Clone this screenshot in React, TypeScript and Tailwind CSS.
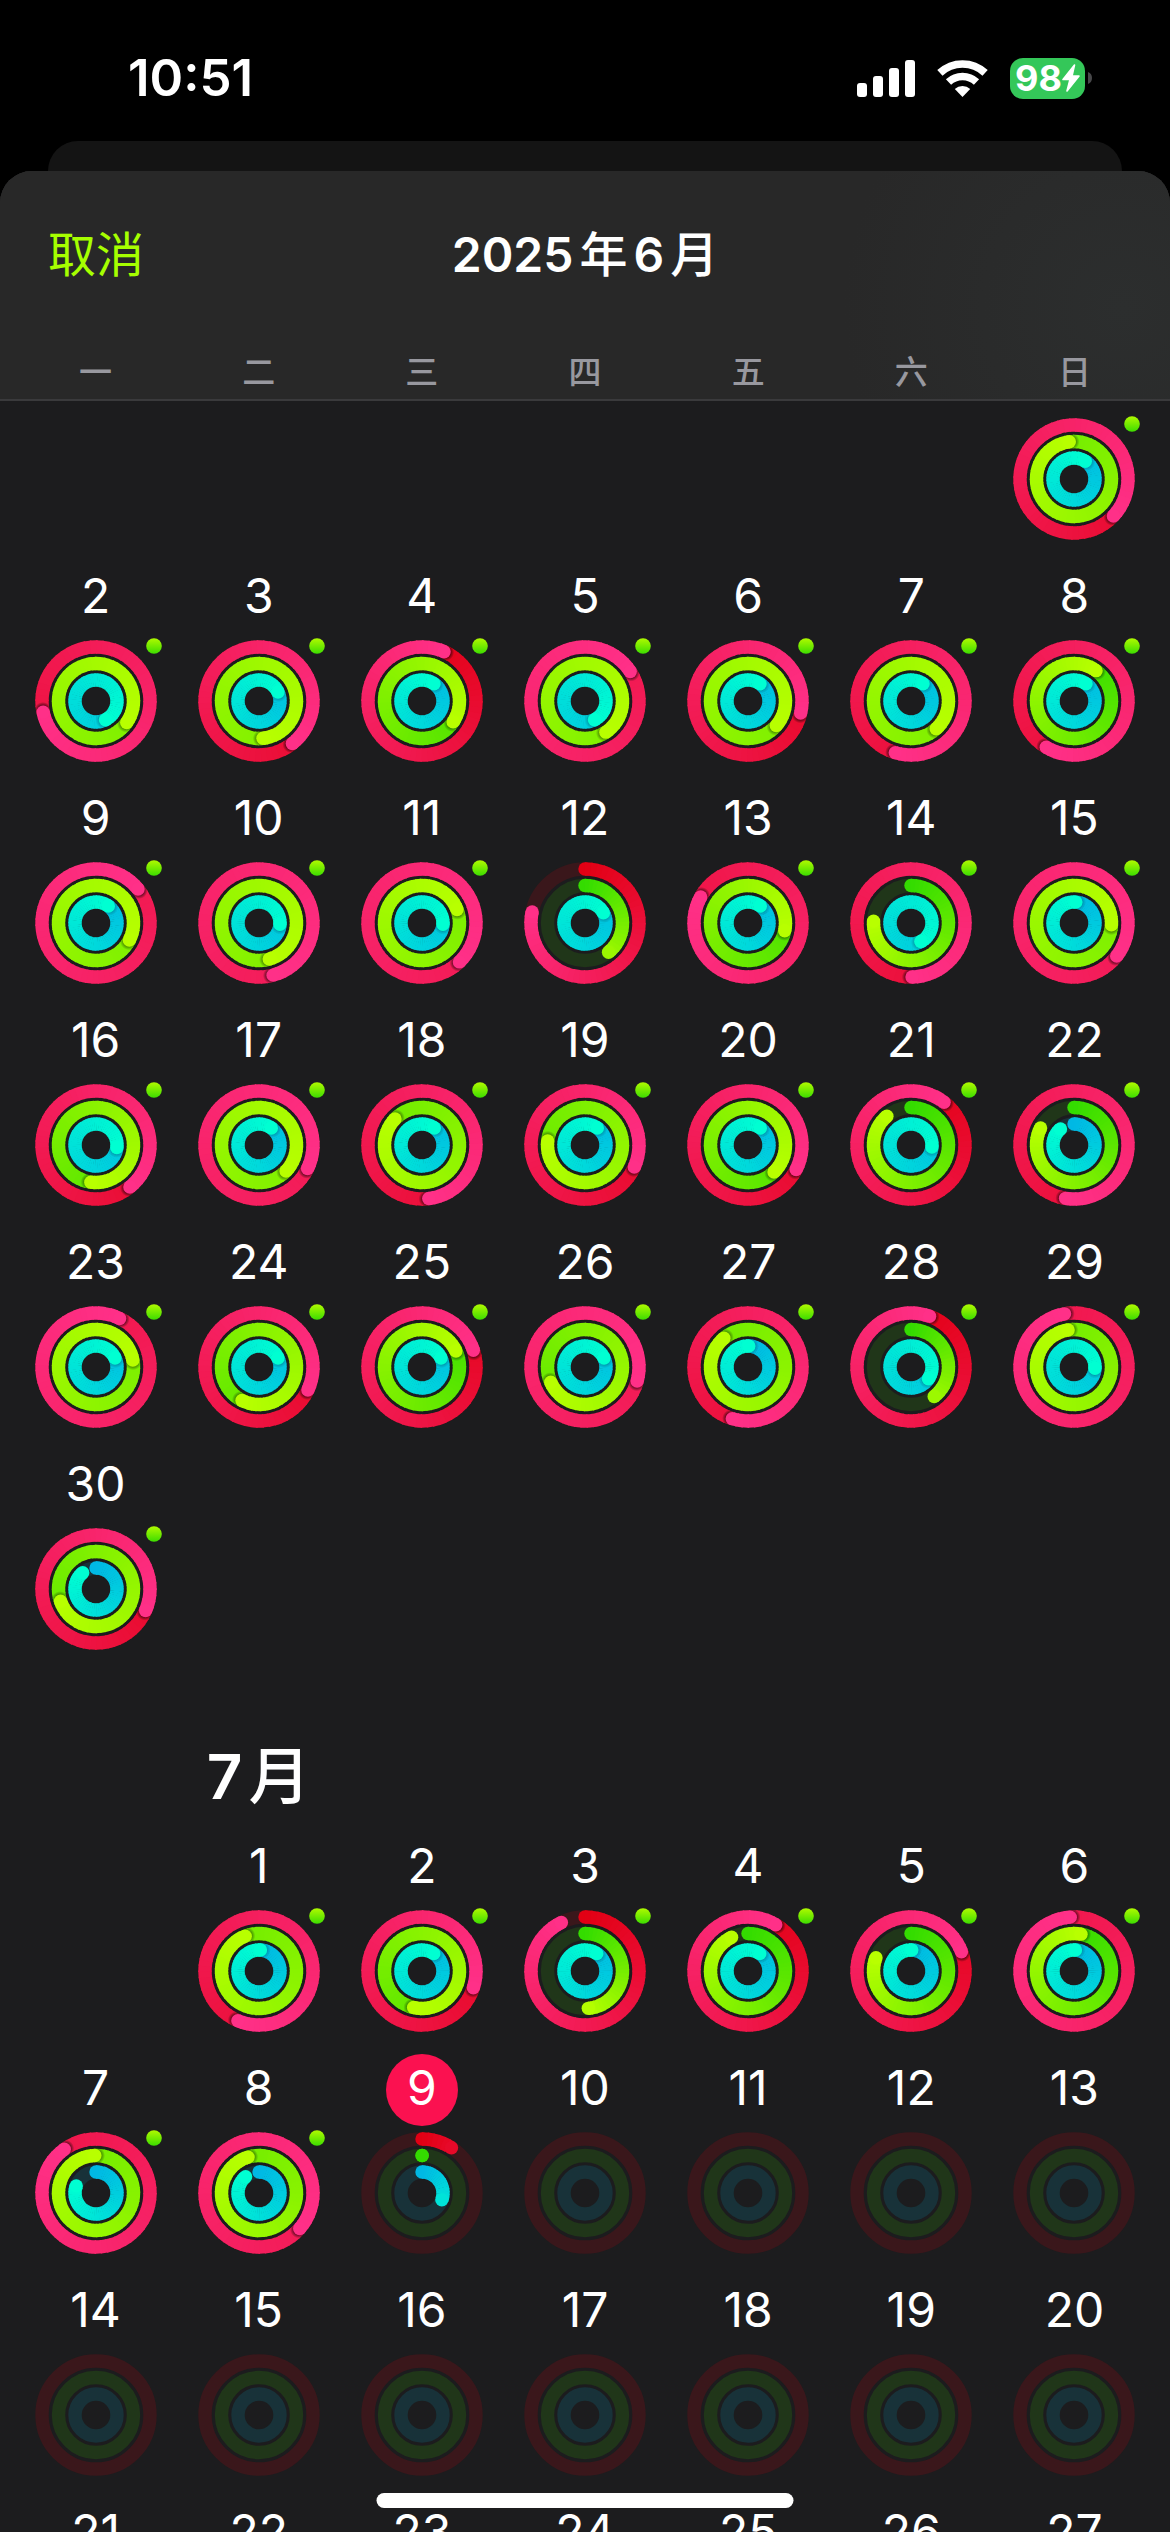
import React from 'react';

type Progress = [move: number, exercise: number, stand: number];
type Day = { day: number; rings?: Progress; award?: boolean; today?: boolean };
type RGB = [number, number, number];

const WEEKDAYS = ['一', '二', '三', '四', '五', '六', '日'];

const JUNE: Progress[] = [
  [1.37, 1.98, 1.09],
  [1.717, 2.347, 1.425],
  [1.394, 2.483, 1.18],
  [1.067, 1.344, 1.097],
  [2.158, 2.406, 1.425],
  [1.286, 2.364, 1.097],
  [1.547, 2.383, 1.097],
  [1.586, 1.1, 1.097],
  [2.142, 2.325, 1.1],
  [2.458, 2.456, 1.26],
  [2.378, 2.192, 1.26],
  [0.783, 0.392, 1.17],
  [1.83, 1.283, 1.1],
  [1.497, 0.758, 1.422],
  [2.355, 2.258, 1.014],
  [1.392, 1.522, 1.27],
  [2.322, 2.372, 1.1],
  [1.48, 1.872, 1.1],
  [1.317, 1.767, 1.1],
  [1.325, 1.378, 1.1],
  [1.105, 0.889, 1.265],
  [1.525, 0.825, 0.889],
  [2.072, 2.22, 1.18],
  [1.32, 1.575, 1.18],
  [1.2, 1.18, 1.18],
  [2.292, 1.683, 1.18],
  [1.547, 1.889, 1.006],
  [1.056, 0.394, 1.344],
  [1.972, 1.975, 1.26],
  [1.315, 1.697, 0.891],
];

const JULY: Progress[] = [
  [1.564, 1.94, 1.011],
  [1.3, 1.536, 1.095],
  [0.928, 0.486, 1.095],
  [1.086, 0.928, 1.095],
  [1.192, 0.808, 1.006],
  [1.989, 1.03, 1.011],
  [1.9, 1.995, 0.805],
  [2.364, 1.953, 0.89],
  [0.092, 0.001, 0.303],
];

const NO_AWARD = { june: [12], july: [9] };

function makeDays(count: number, data: Progress[], noAward: number[], today?: number): Day[] {
  return Array.from({ length: count }, (_, i) => ({
    day: i + 1,
    rings: data[i],
    award: i < data.length && !noAward.includes(i + 1),
    today: today === i + 1,
  }));
}

const juneDays = makeDays(30, JUNE, NO_AWARD.june);
const julyDays = makeDays(27, JULY, NO_AWARD.july, 9);

const RINGS: { radius: number; track: string; from: RGB; to: RGB; shade: number }[] = [
  { radius: 54, track: '#3a171b', from: [226, 0, 20], to: [255, 48, 136], shade: 0.5 },
  { radius: 37.5, track: '#203619', from: [52, 220, 0], to: [184, 255, 0], shade: 0.35 },
  { radius: 21, track: '#183239', from: [0, 184, 228], to: [0, 255, 210], shade: 0.18 },
];

const STROKE = 13.4;

function point(radius: number, turns: number) {
  const a = turns * Math.PI * 2;
  return { x: radius * Math.sin(a), y: -radius * Math.cos(a) };
}

function mix(from: RGB, to: RGB, t: number) {
  const k = Math.max(0, Math.min(1, t));
  return `rgb(${from.map((c, i) => Math.round(c + (to[i] - c) * k)).join(',')})`;
}

function arc(radius: number, start: number, end: number) {
  const a = point(radius, start);
  const b = point(radius, end);
  return `M${a.x.toFixed(2)} ${a.y.toFixed(2)}A${radius} ${radius} 0 0 1 ${b.x.toFixed(2)} ${b.y.toFixed(2)}`;
}

function Ring({ index, value }: { index: number; value: number }) {
  const { radius, from, to, shade } = RINGS[index];
  // Short goals never reach the brightest end of the gradient.
  const span = Math.max(value, 0.5);
  const start = Math.max(0, value - 1);
  const steps = Math.max(1, Math.ceil((value - start) * 60));
  const size = (value - start) / steps;
  const parts = Array.from({ length: steps }, (_, i) => {
    const s = start + i * size;
    const e = s + size;
    const color = mix(from, to, (s + size / 2) / span);
    return (
      <path
        key={i}
        d={arc(radius, s, i === steps - 1 ? e : e + 0.004)}
        stroke={color}
        strokeWidth={STROKE}
        fill="none"
      />
    );
  });
  const front = Math.min(8, steps);
  const tip = point(radius, value);
  const head = point(radius, 0);
  const shadow = point(radius, value + 0.2 / radius);
  return (
    <g>
      {value < 1 && <circle cx={head.x} cy={head.y} r={STROKE / 2} fill={mix(from, to, 0)} />}
      {parts.slice(0, steps - front)}
      {value >= 1 && (
        <g clipPath={`url(#ring-${index})`}>
          <circle cx={shadow.x} cy={shadow.y} r={9} fill="url(#tip-shadow)" opacity={shade} />
        </g>
      )}
      {parts.slice(steps - front)}
      <circle cx={tip.x} cy={tip.y} r={STROKE / 2} fill={mix(from, to, value / span)} />
    </g>
  );
}

function ActivityRings({ rings, award }: { rings?: Progress; award?: boolean }) {
  return (
    <svg viewBox="-61 -61 122 122" className="size-[122px] overflow-visible" aria-hidden="true">
      {RINGS.map((ring, i) => (
        <g key={i}>
          <circle r={ring.radius} stroke={ring.track} strokeWidth={STROKE} fill="none" />
          {rings && <Ring index={i} value={rings[i]} />}
        </g>
      ))}
      {award && <circle cx={58} cy={-55} r={7.8} fill="url(#award)" />}
    </svg>
  );
}

function SharedDefs() {
  return (
    <svg className="absolute size-0" aria-hidden="true">
      <defs>
        <radialGradient id="tip-shadow">
          <stop offset="0.65" stopColor="#000" stopOpacity="1" />
          <stop offset="1" stopColor="#000" stopOpacity="0" />
        </radialGradient>
        <linearGradient id="award" x1="0" y1="0" x2="0" y2="1">
          <stop offset="0" stopColor="#b0fa00" />
          <stop offset="1" stopColor="#3cdc00" />
        </linearGradient>
        {RINGS.map(({ radius }, i) => {
          const o = radius + STROKE / 2;
          const n = radius - STROKE / 2;
          return (
            <clipPath id={`ring-${i}`} key={i}>
              <path
                clipRule="evenodd"
                d={`M${-o} 0a${o} ${o} 0 1 0 ${2 * o} 0a${o} ${o} 0 1 0 ${-2 * o} 0M${-n} 0a${n} ${n} 0 1 0 ${2 * n} 0a${n} ${n} 0 1 0 ${-2 * n} 0`}
              />
            </clipPath>
          );
        })}
      </defs>
    </svg>
  );
}

const COL_START: Record<number, string> = { 2: 'col-start-2', 7: 'col-start-7' };

function DayCell({ item, startColumn, hideLabel }: { item: Day; startColumn?: number; hideLabel?: boolean }) {
  return (
    <button
      type="button"
      aria-label={`${item.day}日`}
      className={`flex flex-col items-center gap-1.5 ${startColumn ? COL_START[startColumn] : ''}`}
    >
      {!hideLabel && (
        <span
          className={`block size-[72px] rounded-full text-center text-[48px] leading-[68px] text-white ${item.today ? 'bg-[#fb1150]' : ''}`}
        >
          {item.day}
        </span>
      )}
      <ActivityRings rings={item.rings} award={item.award} />
    </button>
  );
}

function StatusBar() {
  return (
    <div className="flex h-[141px] shrink-0 items-start justify-between pt-[57px] pr-[78px] pl-32">
      <span className="text-[51px] leading-[42px] font-semibold text-white">10:51</span>
      <div className="flex h-[42px] items-center gap-[22px]">
        <svg viewBox="0 0 58 37" className="h-[37px] w-[58px]" fill="#fff" aria-label="信号">
          <rect x="0" y="23" width="10" height="14" rx="3" />
          <rect x="16" y="16" width="10" height="21" rx="3" />
          <rect x="32" y="8" width="10" height="29" rx="3" />
          <rect x="48" y="0" width="10" height="37" rx="3" />
        </svg>
        <svg viewBox="-25.5 -37 51 37" className="h-[37px] w-[51px]" fill="none" stroke="#fff" aria-label="Wi-Fi">
          <path d="M-22.6 -24.1A33.1 33.1 0 0 1 22.6 -24.1" strokeWidth="7.7" />
          <path d="M-14 -15A20.5 20.5 0 0 1 14 -15" strokeWidth="7.6" />
          <path d="M0 0L-7.7 -7.9A11.2 11.2 0 0 1 7.7 -7.9Z" fill="#fff" stroke="none" />
        </svg>
        <div className="flex items-center gap-[3px]">
          <div className="flex h-[41px] w-[75px] items-center justify-center rounded-[13px] bg-[#34c759]">
            <span className="text-[36px] leading-[41px] font-bold text-white">98</span>
            <svg viewBox="0 0 18 28" className="h-7 w-[18px]" fill="#fff" stroke="#fff" strokeLinejoin="round" aria-hidden="true">
              <path d="M12.5 1L1 15.5H8L5 27L17 12H10Z" strokeWidth="1.6" />
            </svg>
          </div>
          <svg viewBox="0 0 4 12" className="h-3 w-1" fill="#48484a" aria-hidden="true">
            <path d="M0 0A6.5 6.5 0 0 1 0 12Z" />
          </svg>
        </div>
      </div>
    </div>
  );
}

export default function App() {
  return (
    <div className="relative flex h-screen flex-col overflow-hidden bg-black font-['Inter','Noto_Sans_CJK_SC',sans-serif]">
      <SharedDefs />
      <StatusBar />
      <div className="mx-12 h-[30px] shrink-0 rounded-t-[30px] bg-[#141414]" />
      <div className="flex min-h-0 flex-1 flex-col overflow-hidden rounded-t-[32px] bg-[#1c1c1e]">
        <header className="shrink-0 border-b-2 border-[#3a3a3c] bg-[#282828] bg-[radial-gradient(circle_at_96%_60%,#2c2e2e_0,#282828_280px)]">
          <div className="grid h-[168px] grid-cols-[1fr_auto_1fr] items-center px-12">
            <button type="button" className="justify-self-start text-[48px] leading-[60px] text-[#a6ff00]">
              取消
            </button>
            <h1 className="flex gap-1.5 text-[48px] leading-[60px] font-semibold text-white">
              <span>2025</span>
              <span className="font-medium">年</span>
              <span>6</span>
              <span className="font-medium">月</span>
            </h1>
          </div>
          <div className="grid h-[60px] grid-cols-7 items-center px-3.5 pt-2 text-center text-[33px] font-medium text-[#98989f]">
            {WEEKDAYS.map((d) => (
              <span key={d}>{d}</span>
            ))}
          </div>
        </header>
        <main className="min-h-0 flex-1 overflow-hidden px-3.5 pt-[17px]">
          <section className="grid grid-cols-7 gap-y-[22px]" aria-label="2025年6月">
            {juneDays.map((item) => (
              <DayCell key={item.day} item={item} startColumn={item.day === 1 ? 7 : undefined} hideLabel={item.day === 1} />
            ))}
          </section>
          <section className="pt-[82px]" aria-label="2025年7月">
            <div className="grid h-[100px] grid-cols-7 items-start">
              <h2 className="col-start-2 flex justify-center gap-1.5 text-[62px] leading-[90px] font-semibold text-white">
                <span>7</span>
                <span className="font-medium">月</span>
              </h2>
            </div>
            <div className="grid grid-cols-7 gap-y-[22px]">
              {julyDays.map((item) => (
                <DayCell key={item.day} item={item} startColumn={item.day === 1 ? 2 : undefined} />
              ))}
            </div>
          </section>
        </main>
      </div>
      <div className="absolute bottom-6 left-1/2 h-[15px] w-[417px] -translate-x-1/2 rounded-full bg-white" />
    </div>
  );
}
